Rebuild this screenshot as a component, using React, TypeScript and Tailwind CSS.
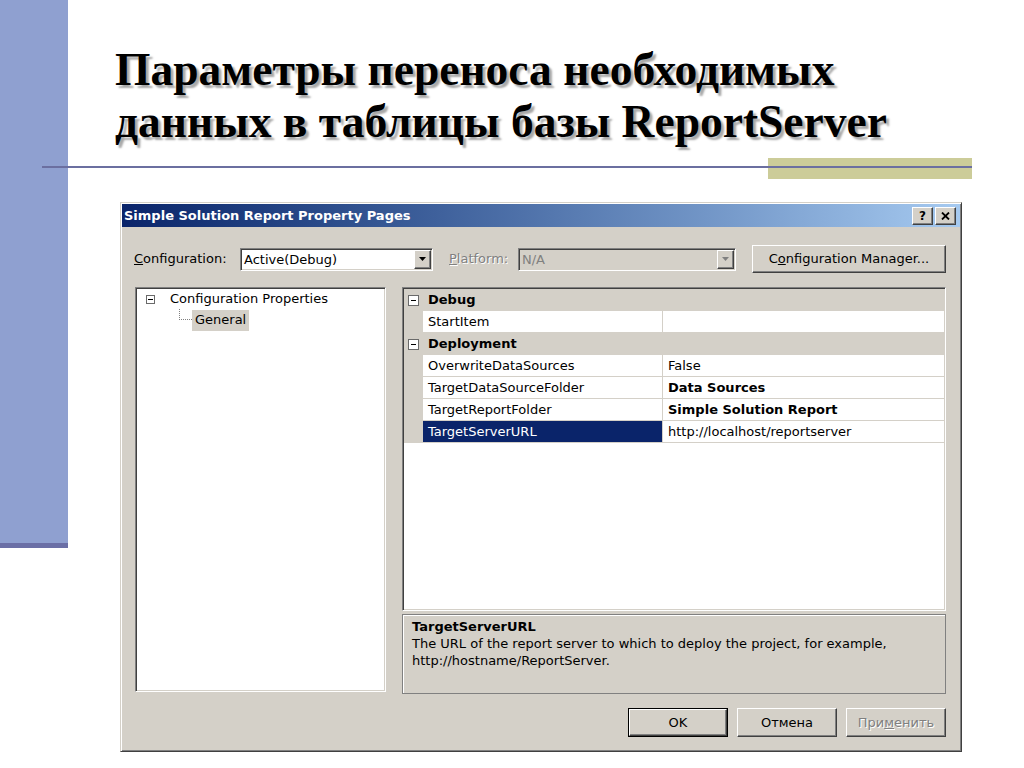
const ui = "font-['DejaVu_Sans',sans-serif]";

// классические рамки Windows
const sunken =
  "border border-t-[#808080] border-l-[#808080] border-r-white border-b-white p-px shadow-[inset_1px_1px_0_#404040,inset_-1px_-1px_0_#d4d0c8]";
const raised =
  "border border-t-white border-l-white border-r-[#404040] border-b-[#404040] p-px shadow-[inset_-1px_-1px_0_#808080]";
const frame =
  "border border-t-[#d4d0c8] border-l-[#d4d0c8] border-r-[#404040] border-b-[#404040] p-px shadow-[inset_1px_1px_0_#fff,inset_-1px_-1px_0_#808080]";

function Arrow({ color }: { color: string }) {
  return (
    <svg width="7" height="4" viewBox="0 0 7 4">
      <polygon points="0,0 7,0 3.5,4" fill={color} />
    </svg>
  );
}

function Combo({
  value,
  width,
  disabled,
}: {
  value: string;
  width: string;
  disabled?: boolean;
}) {
  return (
    <div
      className={`flex h-[23px] ${width} ${sunken} ${
        disabled ? "bg-[#d4d0c8] text-[#808080]" : "bg-white"
      }`}
    >
      <span className="flex-1 pl-[2px] leading-[19px]">{value}</span>
      <div
        className={`flex h-full w-[17px] items-center justify-center bg-[#d4d0c8] ${raised}`}
      >
        <Arrow color={disabled ? "#808080" : "#000"} />
      </div>
    </div>
  );
}

function MinusBox({ size }: { size: string }) {
  return (
    <span
      className={`flex ${size} items-center justify-center border border-[#6a6a6a] bg-white`}
    >
      <span className="h-px w-[5px] bg-black" />
    </span>
  );
}

function Category({ label }: { label: string }) {
  return (
    <div className="flex h-[22px] items-center bg-[#d4d0c8]">
      <div className="flex w-[19px] justify-center">
        <MinusBox size="h-[11px] w-[11px]" />
      </div>
      <span className="pl-[5px] font-bold">{label}</span>
    </div>
  );
}

function Prop({
  name,
  value,
  bold,
  selected,
}: {
  name: string;
  value?: string;
  bold?: boolean;
  selected?: boolean;
}) {
  return (
    <div className="flex h-[22px]">
      <div className="w-[19px] bg-[#d4d0c8]" />
      <div className="w-[240px] border-r border-b border-[#d4d0c8] bg-white">
        <div
          className={`h-full px-[5px] leading-[21px] ${
            selected ? "bg-[#0a246a] text-white" : ""
          }`}
        >
          {name}
        </div>
      </div>
      <div
        className={`flex-1 border-b border-[#d4d0c8] bg-white px-[5px] leading-[21px] ${
          bold ? "font-bold" : ""
        }`}
      >
        {value}
      </div>
    </div>
  );
}

function Button({
  children,
  isDefault,
  disabled,
}: {
  children: React.ReactNode;
  isDefault?: boolean;
  disabled?: boolean;
}) {
  const inner = (
    <div
      className={`flex h-full w-full items-center justify-center bg-[#d4d0c8] ${raised} ${
        disabled ? "text-[#808080] [text-shadow:1px_1px_0_#fff]" : ""
      }`}
    >
      {children}
    </div>
  );
  return isDefault ? (
    <div className="h-[29px] w-[100px] border border-black">{inner}</div>
  ) : (
    <div className="h-[29px] w-[100px]">{inner}</div>
  );
}

function Dialog() {
  return (
    <div
      className={`flex w-[842px] flex-col bg-[#d4d0c8] text-[13px] text-black ${frame} ${ui}`}
    >
      {/* title bar */}
      <div className="flex h-[23px] items-center justify-between bg-linear-to-r from-[#0a246a] to-[#a6caf0] pl-[2px] pr-[4px]">
        <span className="font-bold text-white">
          Simple Solution Report Property Pages
        </span>
        <div className="flex gap-[2px]">
          <div
            className={`flex h-[18px] w-[21px] items-center justify-center bg-[#d4d0c8] text-[12px] font-bold leading-none ${raised}`}
          >
            ?
          </div>
          <div
            className={`flex h-[18px] w-[21px] items-center justify-center bg-[#d4d0c8] ${raised}`}
          >
            <svg width="9" height="8" viewBox="0 0 9 8">
              <path d="M1 0.5 L8 7.5 M8 0.5 L1 7.5" stroke="#000" strokeWidth="1.8" />
            </svg>
          </div>
        </div>
      </div>

      <div className="flex flex-col pb-[13px] pl-[12px] pr-[14px] pt-[18px]">
        {/* configuration row */}
        <div className="flex h-[28px] items-center">
          <span className="w-[106px]">
            <span className="underline">C</span>onfiguration:
          </span>
          <Combo value="Active(Debug)" width="w-[193px]" />
          <span className="ml-[16px] w-[69px] text-[#808080] [text-shadow:1px_1px_0_#fff]">
            <span className="underline">P</span>latform:
          </span>
          <Combo value="N/A" width="w-[218px]" disabled />
          <div className="ml-[16px] h-[28px] w-[194px]">
            <div
              className={`flex h-full w-full items-center justify-center bg-[#d4d0c8] ${raised}`}
            >
              C<span className="underline">o</span>nfiguration Manager...
            </div>
          </div>
        </div>

        {/* panels */}
        <div className="mt-[14px] flex h-[407px] gap-[16px]">
          {/* tree */}
          <div className={`ml-px h-[405px] w-[251px] bg-white ${sunken}`}>
            <div className="flex h-[20px] items-center pl-[9px]">
              <MinusBox size="h-[9px] w-[9px]" />
              <span className="ml-[15px]">Configuration Properties</span>
            </div>
            <div className="flex h-[22px] items-center pl-[42px]">
              <div className="mb-[11px] h-[11px] w-[13px] self-end border-b border-l border-dotted border-[#808080]" />
              <span className="flex h-[21px] items-center bg-[#d4d0c8] px-[3px]">
                General
              </span>
            </div>
          </div>

          {/* property grid + description */}
          <div className="flex w-[544px] flex-col gap-[3px]">
            <div className={`h-[324px] bg-white ${sunken}`}>
              <Category label="Debug" />
              <Prop name="StartItem" />
              <Category label="Deployment" />
              <Prop name="OverwriteDataSources" value="False" />
              <Prop
                name="TargetDataSourceFolder"
                value="Data Sources"
                bold
              />
              <Prop
                name="TargetReportFolder"
                value="Simple Solution Report"
                bold
              />
              <Prop
                name="TargetServerURL"
                value="http://localhost/reportserver"
                selected
              />
            </div>
            <div className="h-[80px] border border-[#808080] px-[9px] pt-[3px] leading-[17px] shadow-[inset_1px_1px_0_#fff]">
              <div className="font-bold">TargetServerURL</div>
              <div>
                The URL of the report server to which to deploy the project, for
                example,
              </div>
              <div>http://hostname/ReportServer.</div>
            </div>
          </div>
        </div>

        {/* buttons */}
        <div className="mt-[14px] flex justify-end gap-[9px]">
          <Button isDefault>OK</Button>
          <Button>Отмена</Button>
          <Button disabled>
            При<span className="underline">м</span>енить
          </Button>
        </div>
      </div>
    </div>
  );
}

export default function App() {
  return (
    <div className="relative flex h-[768px] w-[1024px] overflow-hidden bg-white">
      {/* левая полоса */}
      <div className="h-[548px] w-[68px] shrink-0 border-b-[5px] border-[#6b6fa6] bg-[#8fa0d0]" />

      <div className="flex flex-col pl-[47px] pt-[44px]">
        <h1 className="h-[106px] whitespace-nowrap font-['Liberation_Serif',serif] text-[45.5px] font-bold leading-[52px] text-black [text-shadow:3px_3px_2px_#a8a8a8]">
          Параметры переноса необходимых
          <br />
          данных в таблицы базы ReportServer
        </h1>
        <div className="ml-[5px] mt-[52px]">
          <Dialog />
        </div>
      </div>

      {/* декоративная линия */}
      <div className="absolute left-[768px] top-[158px] h-[21px] w-[204px] bg-[#cccc99]" />
      <div className="absolute left-[42px] top-[166px] h-[2px] w-[930px] bg-[#6b6fa0]" />
    </div>
  );
}
